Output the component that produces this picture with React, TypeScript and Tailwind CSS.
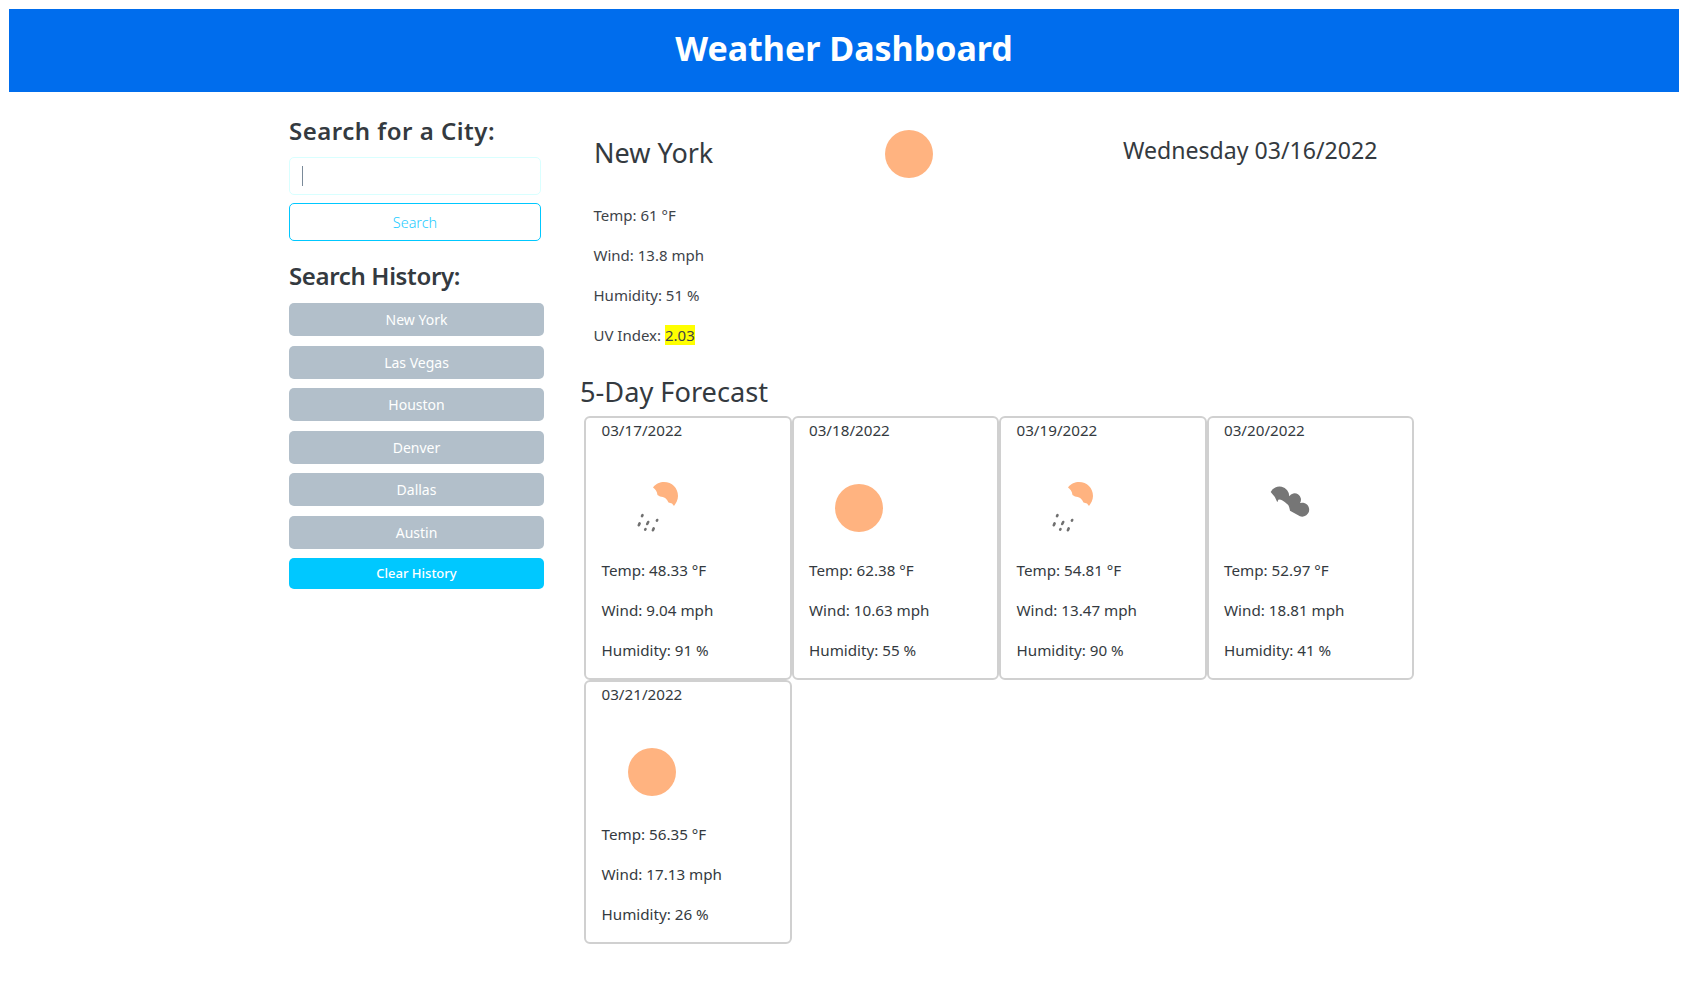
import React from 'react';

type Kind = 'sun' | 'rain' | 'clouds';

const history = ['New York', 'Las Vegas', 'Houston', 'Denver', 'Dallas', 'Austin'];

const forecast: { date: string; icon: Kind; temp: string; wind: string; humidity: string }[] = [
  { date: '03/17/2022', icon: 'rain', temp: '48.33', wind: '9.04', humidity: '91' },
  { date: '03/18/2022', icon: 'sun', temp: '62.38', wind: '10.63', humidity: '55' },
  { date: '03/19/2022', icon: 'rain', temp: '54.81', wind: '13.47', humidity: '90' },
  { date: '03/20/2022', icon: 'clouds', temp: '52.97', wind: '18.81', humidity: '41' },
  { date: '03/21/2022', icon: 'sun', temp: '56.35', wind: '17.13', humidity: '26' },
];

function WeatherIcon({ kind }: { kind: Kind }) {
  return (
    <svg viewBox="0 0 100 100" className="w-[100px] h-[100px] block">
      {kind === 'sun' && <circle cx="50" cy="50" r="24" fill="#ffb380" />}
      {kind === 'rain' && (
        <g>
          <path
            d="M51 29.5 C54 25.5 58 24 62 24 C70 24 76 30 76 38 C76 42 74 45 72 48 L70 45.5 L66.5 44.5 C65 40.5 62 38.5 58 38.5 L55.5 37 C55 33 53 31 51 29.5 Z"
            fill="#ffb380"
          />
          <g stroke="#707070" strokeWidth="2.6" strokeLinecap="round">
            <path d="M40.5 57.2 L40 58.2" />
            <path d="M37.6 65.4 L36.8 67.2" />
            <path d="M46.2 64 L45.2 66" />
            <path d="M55.2 62 L54.9 62.6" />
            <path d="M43.5 71.2 L43.2 71.7" />
            <path d="M51.7 70.4 L50.9 72.2" />
          </g>
        </g>
      )}
      {kind === 'clouds' && (
        <path
          d="M46.7 34 A9.8 9.8 0 0 1 65.3 38.3 A5.6 5.6 0 0 1 76 45 A7 7 0 1 1 76 58.3 L66 52.7 Q65 47 63.3 46.3 Q58 41 54.3 41.7 L53.3 44.3 Q51 38 46.7 34 Z"
          fill="#767676"
        />
      )}
    </svg>
  );
}

function Stat({ children }: { children: React.ReactNode }) {
  return <p className="h-6 mb-4 leading-6">{children}</p>;
}

function ForecastCard({ day }: { day: (typeof forecast)[number] }) {
  return (
    <div className="w-[207.5px] h-[264px] border-2 border-[#d0d0d0] rounded-[6px] pl-[15.5px] text-[15.2px] text-[#343a40]">
      <p className="h-6 leading-[24px]">{day.date}</p>
      <div className="mt-[16px]">
        <WeatherIcon kind={day.icon} />
      </div>
      <Stat>Temp: {day.temp} °F</Stat>
      <Stat>Wind: {day.wind} mph</Stat>
      <Stat>Humidity: {day.humidity} %</Stat>
    </div>
  );
}

export default function App() {
  return (
    <div className="min-h-[1006px] bg-white pt-[9px] pl-[9px] pr-[8px] font-['Noto_Sans','Open_Sans',sans-serif] text-[#343a40]">
      <header className="h-[83px] bg-[#006ded] flex justify-center pt-[16px]">
        <h1 className="text-[34px] leading-[46px] font-bold text-white">Weather Dashboard</h1>
      </header>

      <div className="flex pl-[280px]">
        <aside className="w-[255px] pt-[21px] shrink-0">
          <h2 className="text-[24px] leading-[36px] font-semibold tracking-[0.5px]">Search for a City:</h2>
          <div className="w-[252px] h-[38px] mt-[8px] border border-[#d9ffff] rounded-[5px] flex items-center pl-[12px]">
            <span className="w-px h-[20px] bg-[#7a8a99]" />
          </div>
          <button className="w-[252px] h-[38px] mt-[8px] pt-px border border-[#00c8ff] rounded-[5px] text-[14.4px] font-light text-[#1fcbff]">
            Search
          </button>
          <h2 className="text-[24px] leading-[36px] font-semibold tracking-[-0.35px] mt-[17px] mb-[9px]">Search History:</h2>
          <div className="flex flex-col gap-[9.5px]">
            {history.map((city) => (
              <button
                key={city}
                className="h-[33px] bg-[#b2bfca] rounded-[5px] text-white text-[14px]"
              >
                {city}
              </button>
            ))}
            <button className="h-[31px] bg-[#00c8ff] rounded-[5px] text-white text-[13px] font-medium">
              Clear History
            </button>
          </div>
        </aside>

        <main className="ml-[36px] flex-1">
          <div className="grid grid-cols-[265px_264px_300px] ml-[14px] pt-[12px] h-[111px] items-start">
            <h2 className="text-[27px] leading-[42px] mt-[28px]">New York</h2>
            <WeatherIcon kind="sun" />
            <p className="text-[23.1px] leading-[36px] mt-[28px]">Wednesday 03/16/2022</p>
          </div>
          <div className="ml-[13.5px] text-[15px] text-[#3d4349]">
            <Stat>Temp: 61 °F</Stat>
            <Stat>Wind: 13.8 mph</Stat>
            <Stat>Humidity: 51 %</Stat>
            <Stat>
              UV Index: <span className="bg-[#ffff00]">2.03</span>
            </Stat>
          </div>
          <h2 className="text-[27.2px] leading-[42px] mt-[24px]">5-Day Forecast</h2>
          <div className="flex flex-wrap w-[835px] ml-[4px] mt-[3px]">
            {forecast.map((day) => (
              <ForecastCard key={day.date} day={day} />
            ))}
          </div>
        </main>
      </div>
    </div>
  );
}
